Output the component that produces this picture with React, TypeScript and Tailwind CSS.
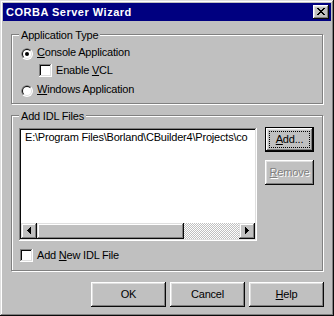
import React from "react";

const raised =
  "shadow-[inset_-1px_-1px_#0a0a0a,inset_1px_1px_#fff,inset_-2px_-2px_#808080,inset_2px_2px_#dfdfdf]";
const raisedSb =
  "shadow-[inset_-1px_-1px_#0a0a0a,inset_1px_1px_#dfdfdf,inset_-2px_-2px_#808080,inset_2px_2px_#fff]";
const sunken =
  "shadow-[inset_-1px_-1px_#fff,inset_1px_1px_#808080,inset_-2px_-2px_#dfdfdf,inset_2px_2px_#0a0a0a]";

function Radio({ checked }: { checked?: boolean }) {
  return (
    <svg width="12" height="12" viewBox="0 0 12 12" className="shrink-0 mt-[2px]">
      <circle cx="6" cy="6" r="6" fill="#fff" />
      <path d="M1.757 10.243A6 6 0 0 1 10.243 1.757Z" fill="#808080" />
      <circle cx="6" cy="6" r="5" fill="#dfdfdf" />
      <path d="M2.464 9.536A5 5 0 0 1 9.536 2.464Z" fill="#0a0a0a" />
      <circle cx="6" cy="6" r="4" fill="#fff" />
      {checked && <circle cx="6" cy="6" r="2" fill="#000" />}
    </svg>
  );
}

function Check() {
  return <div className={`w-[13px] h-[13px] shrink-0 bg-white ${sunken}`} />;
}

function U({ children }: { children: React.ReactNode }) {
  return <span className="underline underline-offset-1 decoration-1">{children}</span>;
}

function Btn({ children, w = "w-[75px]" }: { children: React.ReactNode; w?: string }) {
  return (
    <div className={`${w} h-[25px] bg-[#c0c0c0] flex items-center justify-center pb-[1px] ${raised}`}>
      {children}
    </div>
  );
}

export default function App() {
  return (
    <div
      className={`w-[334px] h-[316px] bg-[#c0c0c0] p-[3px] flex flex-col font-['Liberation_Sans',Arial,sans-serif] text-[11px] leading-[13px] tracking-[-0.2px] text-black shadow-[inset_-1px_-1px_#0a0a0a,inset_1px_1px_#dfdfdf,inset_-2px_-2px_#808080,inset_2px_2px_#fff]`}
    >
      {/* Title bar */}
      <div className="h-[18px] shrink-0 bg-[#000080] flex items-center justify-between pl-[3px] pr-[2px]">
        <span className="text-white font-bold tracking-[0.5px]">CORBA Server Wizard</span>
        <div className={`w-[16px] h-[14px] bg-[#c0c0c0] pl-[4px] pt-[3px] ${raised}`}>
          <svg width="8" height="7" viewBox="0 0 8 7" shapeRendering="crispEdges">
            <path
              d="M0 0h2v1H0zM6 0h2v1H6zM1 1h2v1H1zM5 1h2v1H5zM2 2h4v1H2zM3 3h2v1H3zM2 4h4v1H2zM1 5h2v1H1zM5 5h2v1H5zM0 6h2v1H0zM6 6h2v1H6z"
              fill="#000"
            />
          </svg>
        </div>
      </div>

      <div className="ml-[8px] flex flex-col">
        {/* Application Type group */}
        <div className="relative mt-[13px] w-[312px] h-[70px] border border-[#808080] shadow-[inset_1px_1px_#fff,1px_1px_#fff] pl-[9px] pt-[11px]">
          <span className="absolute left-[7px] top-[-6px] px-[2px] bg-[#c0c0c0]">Application Type</span>
          <div className="flex items-start h-[14px]">
            <Radio checked />
            <span className="ml-[4px]">
              <U>C</U>onsole Application
            </span>
          </div>
          <div className="flex items-start h-[13px] mt-[4px] ml-[18px]">
            <Check />
            <span className="ml-[4px]">
              Enable <U>V</U>CL
            </span>
          </div>
          <div className="flex items-start h-[14px] mt-[6px]">
            <Radio />
            <span className="ml-[4px]">
              <U>W</U>indows Application
            </span>
          </div>
        </div>

        {/* Add IDL Files group */}
        <div className="relative mt-[11px] w-[312px] h-[156px] border border-[#808080] shadow-[inset_1px_1px_#fff,1px_1px_#fff] pl-[7px] pt-[12px]">
          <span className="absolute left-[7px] top-[-6px] px-[2px] bg-[#c0c0c0]">Add IDL Files</span>
          <div className="flex items-start">
            <div className={`w-[238px] h-[113px] bg-white p-[2px] flex flex-col ${sunken}`}>
              <div className="flex-1 overflow-hidden whitespace-nowrap pl-[4px] pt-[1px]">
                E:\Program Files\Borland\CBuilder4\Projects\co
              </div>
              <div className="h-[16px] flex">
                <div className={`w-[16px] h-[16px] bg-[#c0c0c0] flex justify-center items-start pt-[4px] ${raisedSb}`}>
                  <svg width="4" height="7" viewBox="0 0 4 7" shapeRendering="crispEdges">
                    <path d="M0 3h1v1H0zM1 2h1v3H1zM2 1h1v5H2zM3 0h1v7H3z" fill="#000" />
                  </svg>
                </div>
                <div className={`w-[147px] h-[16px] bg-[#c0c0c0] ${raisedSb}`} />
                <div className="flex-1 h-[16px] bg-[conic-gradient(#fff_25%,#c0c0c0_0_50%,#fff_0_75%,#c0c0c0_0)] bg-[length:2px_2px]" />
                <div className={`w-[16px] h-[16px] bg-[#c0c0c0] flex justify-center items-start pt-[4px] ${raisedSb}`}>
                  <svg width="4" height="7" viewBox="0 0 4 7" shapeRendering="crispEdges">
                    <path d="M3 3h1v1H3zM2 2h1v3H2zM1 1h1v5H1zM0 0h1v7H0z" fill="#000" />
                  </svg>
                </div>
              </div>
            </div>
            <div className="ml-[8px] -mt-px flex flex-col gap-[8px]">
              <div className="relative w-[49px] h-[25px] border border-black">
                <div className={`w-full h-full bg-[#c0c0c0] flex items-center justify-center pb-[1px] ${raised}`}>
                  <span>
                    <U>A</U>dd...
                  </span>
                </div>
                <div className="absolute inset-[3px] border border-dotted border-black" />
              </div>
              <div
                className={`w-[49px] h-[25px] bg-[#c0c0c0] flex items-center justify-center pb-[1px] text-[#808080] [text-shadow:1px_1px_0_#fff] ${raised}`}
              >
                <span>
                  <U>R</U>emove
                </span>
              </div>
            </div>
          </div>
          <div className="flex items-start h-[13px] mt-[8px] ml-[1px]">
            <Check />
            <span className="ml-[4px]">
              Add <U>N</U>ew IDL File
            </span>
          </div>
        </div>
      </div>

      {/* Bottom buttons */}
      <div className="mt-[11px] flex justify-end gap-[4px] pr-[7px]">
        <Btn>OK</Btn>
        <Btn>Cancel</Btn>
        <Btn>
          <span>
            <U>H</U>elp
          </span>
        </Btn>
      </div>
    </div>
  );
}
